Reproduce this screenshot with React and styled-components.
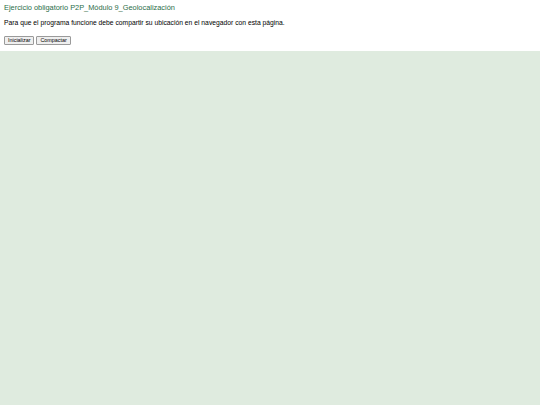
import React from "react";
import styled, { createGlobalStyle } from "styled-components";

const Global = createGlobalStyle`
  html, body { margin: 0; padding: 0; height: 100%; }
  body { font-family: "Liberation Sans", Arial, sans-serif; background: #fff; }
  #root { height: 100%; }
`;

const Page = styled.div`
  display: flex;
  flex-direction: column;
  height: 100vh;
`;

const Header = styled.div`
  padding: 3px 4px 0 4px;
`;

const Title = styled.h1`
  margin: 0;
  font-size: 7.4px;
  font-weight: normal;
  color: #2a6e48;
  line-height: 10px;
`;

const Note = styled.p`
  margin: 5px 0 0 0;
  font-size: 6.75px;
  line-height: 10px;
  color: #000;
`;

const Controls = styled.div`
  display: flex;
  gap: 2px;
  margin-top: 8px;
  margin-bottom: 6px;
`;

const Button = styled.button`
  font-family: "Liberation Sans", Arial, sans-serif;
  font-size: 5.4px;
  line-height: 7px;
  padding: 0 3px;
  height: 9px;
  background: #efefef;
  border: 1px solid #9a9a9a;
  border-radius: 1px;
  color: #000;
`;

const MapArea = styled.div`
  flex: 1;
  background: #dfebdf;
`;

export default function App() {
  return (
    <>
      <Global />
      <Page>
        <Header>
          <Title>Ejercicio obligatorio P2P_Módulo 9_Geolocalización</Title>
          <Note>Para que el programa funcione debe compartir su ubicación en el navegador con esta página.</Note>
          <Controls>
            <Button>Inicializar</Button>
            <Button>Compactar</Button>
          </Controls>
        </Header>
        <MapArea />
      </Page>
    </>
  );
}
